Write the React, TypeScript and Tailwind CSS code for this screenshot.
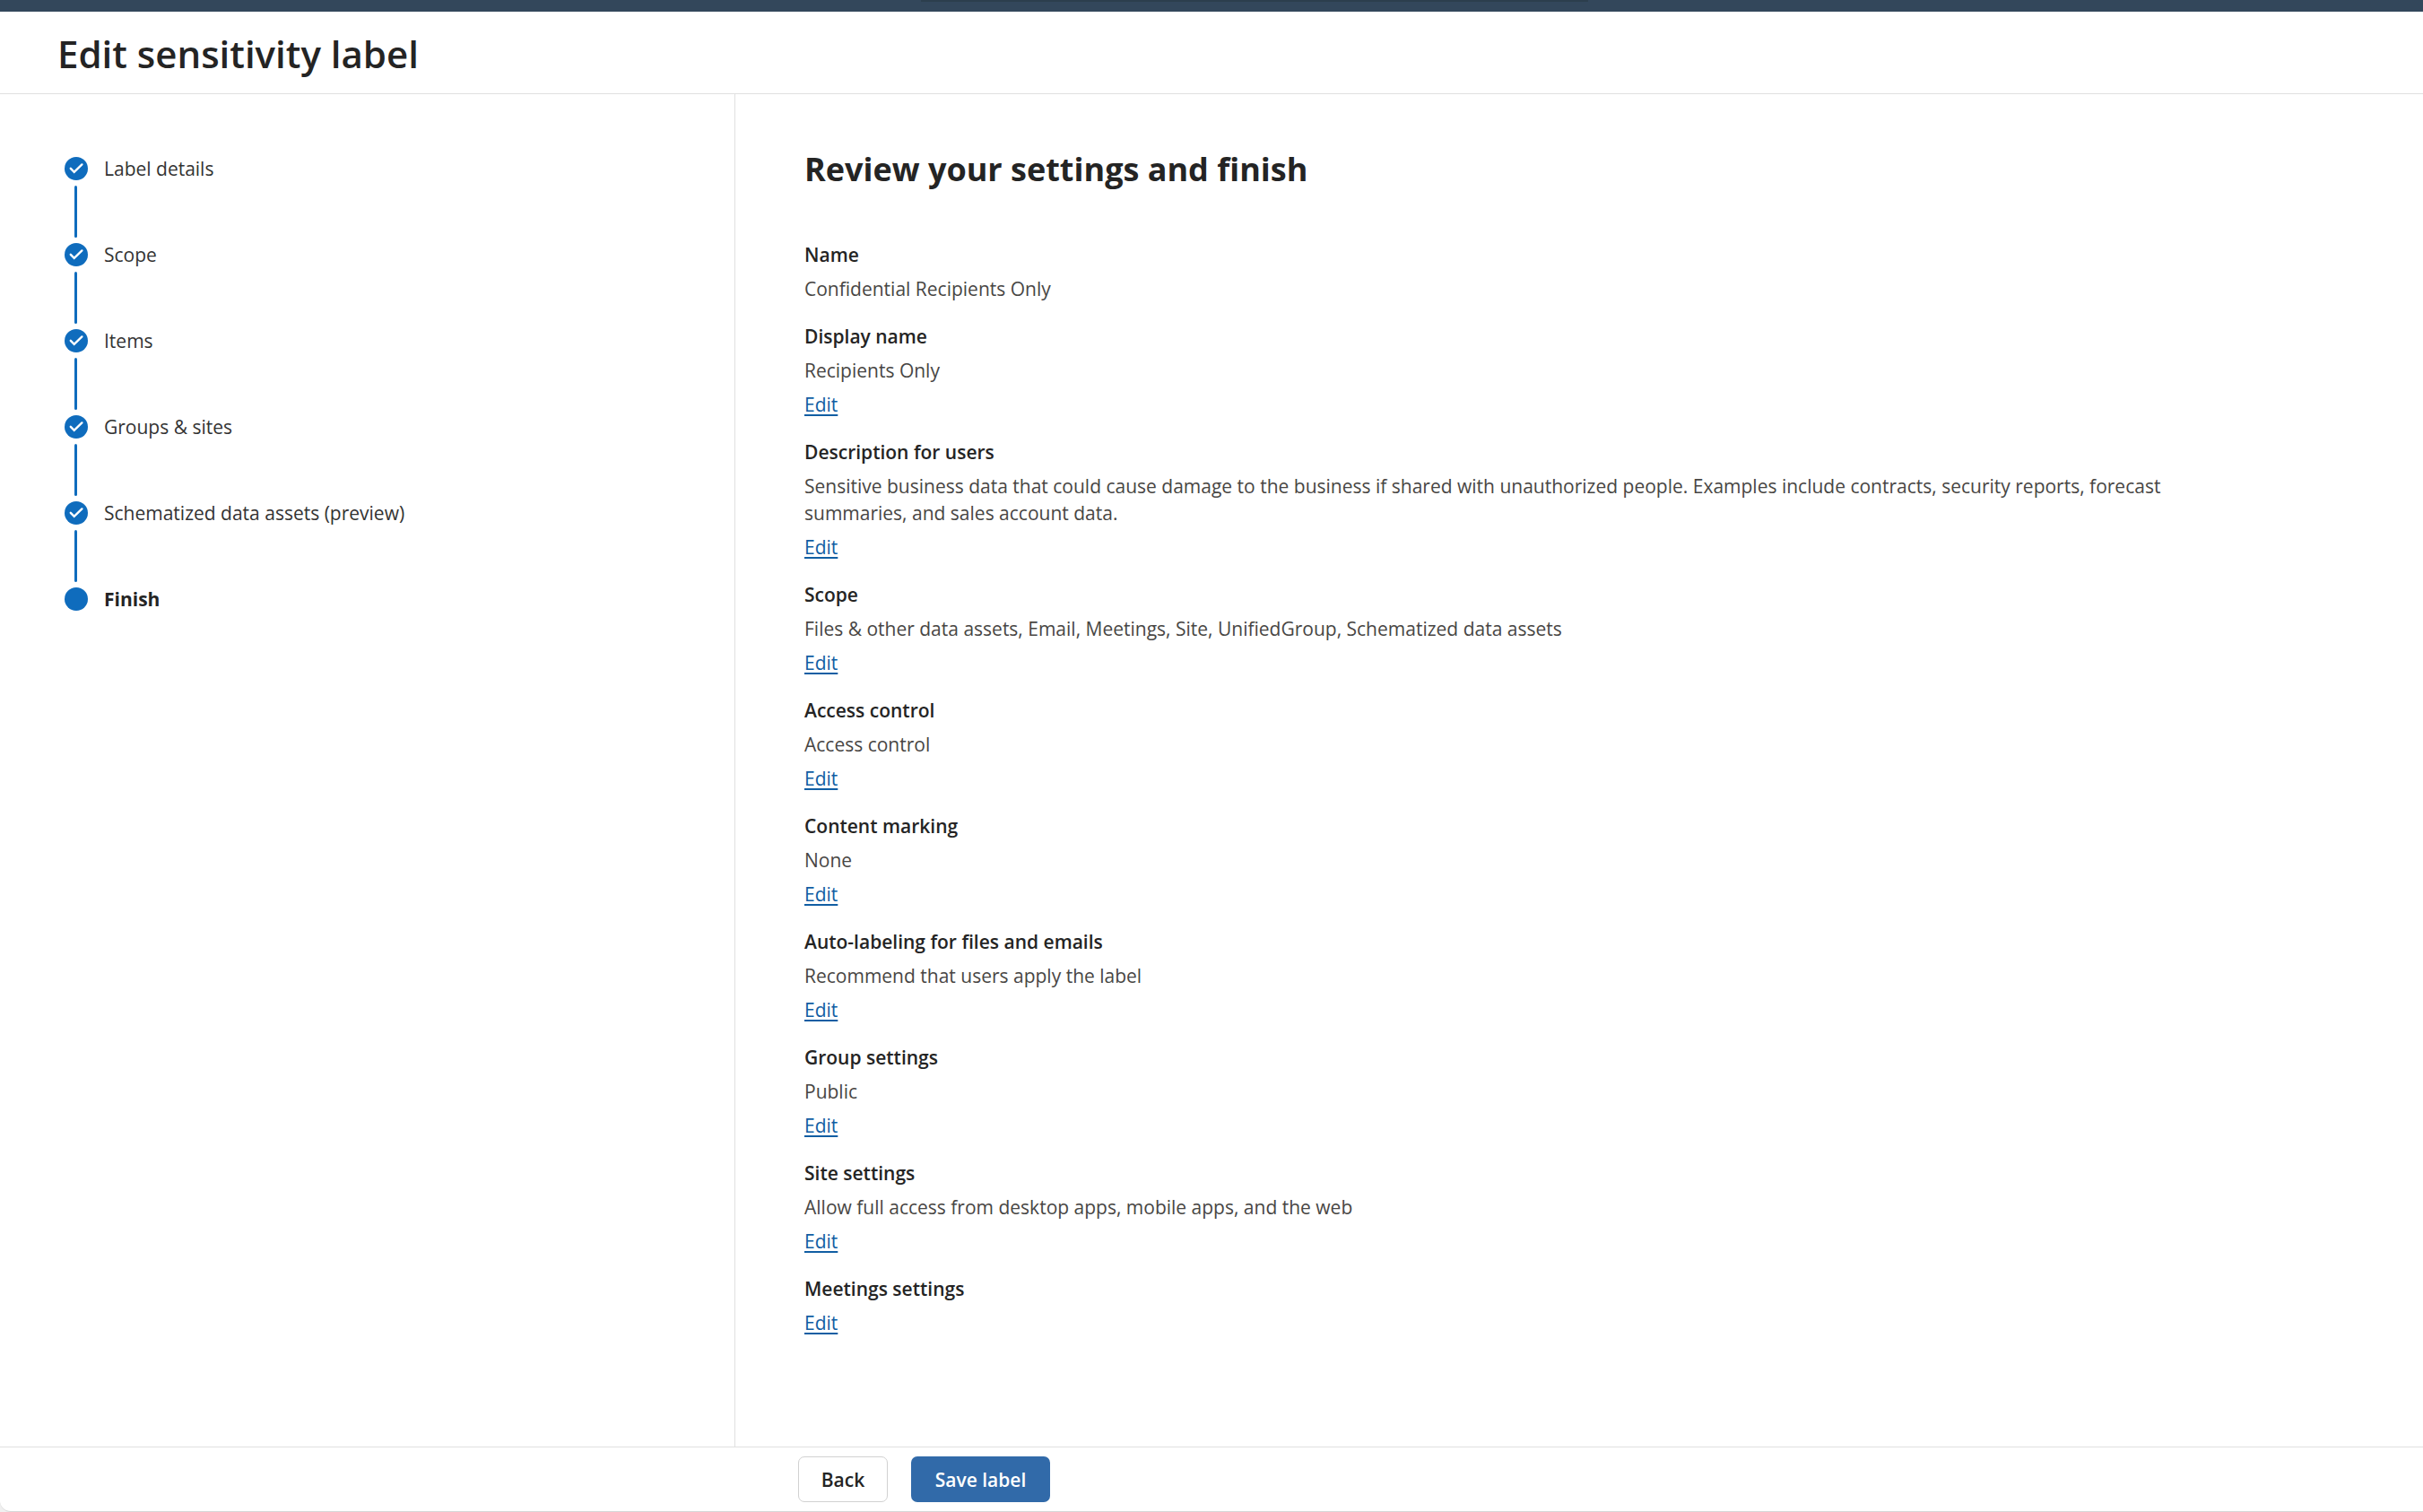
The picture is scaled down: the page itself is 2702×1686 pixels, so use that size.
const steps = [
  'Label details',
  'Scope',
  'Items',
  'Groups & sites',
  'Schematized data assets (preview)',
  'Finish',
];

type Setting = { name: string; value?: string; editable?: boolean };

const settings: Setting[] = [
  { name: 'Name', value: 'Confidential Recipients Only', editable: false },
  { name: 'Display name', value: 'Recipients Only' },
  {
    name: 'Description for users',
    value:
      'Sensitive business data that could cause damage to the business if shared with unauthorized people. Examples include contracts, security reports, forecast summaries, and sales account data.',
  },
  {
    name: 'Scope',
    value: 'Files & other data assets, Email, Meetings, Site, UnifiedGroup, Schematized data assets',
  },
  { name: 'Access control', value: 'Access control' },
  { name: 'Content marking', value: 'None' },
  { name: 'Auto-labeling for files and emails', value: 'Recommend that users apply the label' },
  { name: 'Group settings', value: 'Public' },
  { name: 'Site settings', value: 'Allow full access from desktop apps, mobile apps, and the web' },
  { name: 'Meetings settings' },
];

function StepMarker({ done }: { done: boolean }) {
  return (
    <svg viewBox="0 0 26 26" className="size-[26px] shrink-0" aria-hidden="true">
      <circle cx="13" cy="13" r="13" fill="#0f6cbd" />
      {done && (
        <path
          d="M6.8 12.8l3.9 4L19.4 8.4"
          fill="none"
          stroke="#fff"
          strokeWidth="2.4"
          strokeLinecap="round"
          strokeLinejoin="miter"
        />
      )}
    </svg>
  );
}

function Steps() {
  return (
    <nav aria-label="Steps" className="w-[820px] shrink-0 border-r border-[#e0e0e0] pt-[70px] pl-[72px]">
      <ol className="text-[21px] leading-[26px]">
        {steps.map((step, i) => {
          const last = i === steps.length - 1;
          return (
            <li key={step} aria-current={last ? 'step' : undefined} className="flex gap-[18px]">
              <div className="flex flex-col">
                <StepMarker done={!last} />
                {!last && <div className="my-[6px] ml-[11px] h-[58px] w-[3px] rounded-full bg-[#0f6cbd]" />}
              </div>
              <span className={last ? 'font-bold text-[#242424]' : 'text-[#333333]'}>{step}</span>
            </li>
          );
        })}
      </ol>
    </nav>
  );
}

function SettingItem({ name, value, editable = true }: Setting) {
  return (
    <section className="flex flex-col items-start gap-2">
      <h3 className="font-semibold text-[#242424]">{name}</h3>
      {value && <p className="text-[#484644]">{value}</p>}
      {editable && (
        <a
          href="#"
          aria-label={`Edit ${name}`}
          className="text-[#115ea3] underline decoration-2 underline-offset-[3px]"
        >
          Edit
        </a>
      )}
    </section>
  );
}

export default function App() {
  return (
    <div className="flex min-h-screen flex-col bg-[#f0f0f0] font-['Open_Sans',sans-serif] text-[#242424]">
      <div className="h-[13px] shrink-0 bg-[#33475b]">
        <div className="ml-[38%] h-[2px] w-[744px] bg-[#2c3e4d]" />
      </div>
      <div className="flex grow flex-col rounded-bl-[12px] border-b border-[#d6d6d6] bg-white">
        <header className="flex h-[92px] shrink-0 items-center border-b border-[#e0e0e0] pt-0.5 pl-16">
          <h1 className="text-[42px] leading-[56px] font-semibold">Edit sensitivity label</h1>
        </header>
        <div className="flex grow">
          <Steps />
          <main className="min-w-0 grow pt-[60px] pr-[240px] pb-16 pl-[77px]">
            <h2 className="text-[36px] leading-[48px] font-bold">Review your settings and finish</h2>
            <div className="mt-[56px] flex max-w-[1540px] flex-col gap-[23px] text-[21px] leading-[30px]">
              {settings.map((s) => (
                <SettingItem key={s.name} {...s} />
              ))}
            </div>
          </main>
        </div>
        <footer className="flex h-[72px] shrink-0 items-center gap-[26px] border-t border-[#e0e0e0] pl-[890px] text-[21px] leading-[30px] font-semibold">
          <button type="button" className="h-[51px] w-[100px] rounded-[7px] border border-[#d1d1d1] bg-white">
            Back
          </button>
          <button type="button" className="h-[51px] w-[155px] rounded-[7px] bg-[#316aa9] text-white">
            Save label
          </button>
        </footer>
      </div>
    </div>
  );
}
